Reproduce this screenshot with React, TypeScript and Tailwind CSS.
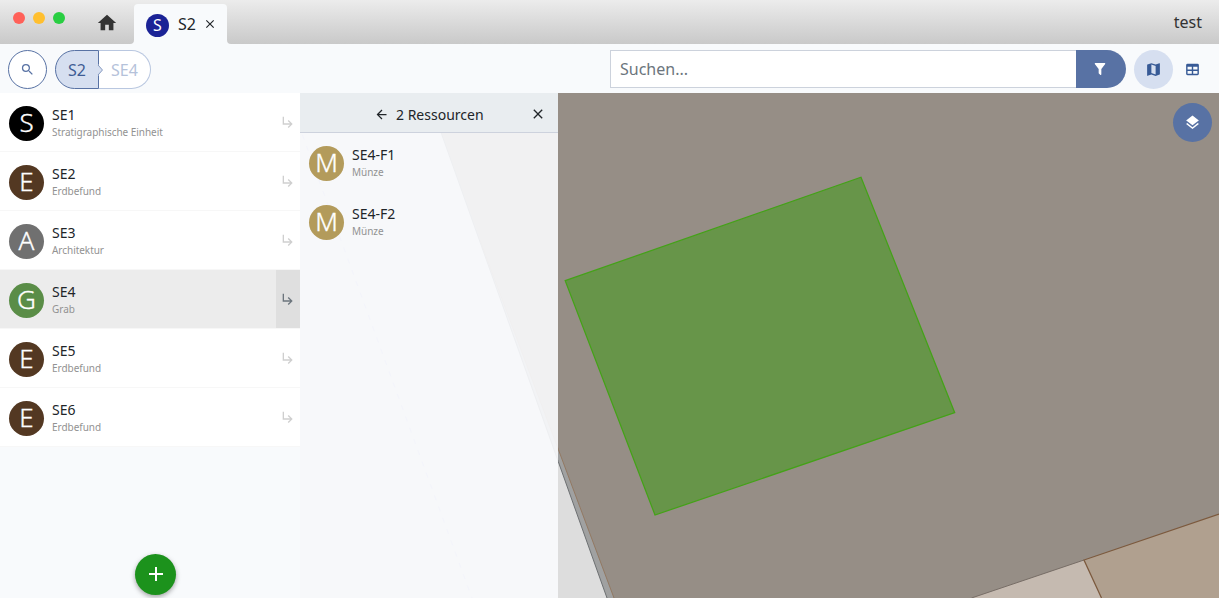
import React from "react";

const ICONS = {
  home: "M10,20V14H14V20H19V12H22L12,3L2,12H5V20H10Z",
  magnify:
    "M9.5,3A6.5,6.5 0 0,1 16,9.5C16,11.11 15.41,12.59 14.44,13.73L14.71,14H15.5L20.5,19L19,20.5L14,15.5V14.71L13.73,14.44C12.59,15.41 11.11,16 9.5,16A6.5,6.5 0 0,1 3,9.5A6.5,6.5 0 0,1 9.5,3M9.5,5C7,5 5,7 5,9.5C5,12 7,14 9.5,14C12,14 14,12 14,9.5C14,7 12,5 9.5,5Z",
  close:
    "M19,6.41L17.59,5L12,10.59L6.41,5L5,6.41L10.59,12L5,17.59L6.41,19L12,13.41L17.59,19L19,17.59L13.41,12L19,6.41Z",
  arrowLeft:
    "M20,11V13H8L13.5,18.5L12.08,19.92L4.16,12L12.08,4.08L13.5,5.5L8,11H20Z",
  sub: "M19,15L13,21L11.58,19.58L15.17,16H4V4H6V14H15.17L11.58,10.42L13,9L19,15Z",
  map: "M15,19L9,16.89V5L15,7.11M20.5,3C20.44,3 20.39,3 20.34,3L15,5.1L9,3L3.36,4.9C3.15,4.97 3,5.15 3,5.38V20.5A0.5,0.5 0 0,0 3.5,21C3.55,21 3.61,21 3.66,20.97L9,18.9L15,21L20.64,19.1C20.85,19 21,18.85 21,18.62V3.5A0.5,0.5 0 0,0 20.5,3Z",
  table:
    "M5,4H19A2,2 0 0,1 21,6V18A2,2 0 0,1 19,20H5A2,2 0 0,1 3,18V6A2,2 0 0,1 5,4M5,8V12H11V8H5M13,8V12H19V8H13M5,14V18H11V14H5M13,14V18H19V14H13Z",
  layers:
    "M12,16L19.36,10.27L21,9L12,2L3,9L4.63,10.27M12,18.54L4.62,12.81L3,14.07L12,21.07L21,14.07L19.37,12.8L12,18.54Z",
  filter:
    "M14,12V19.88C14.04,20.18 13.94,20.5 13.71,20.71C13.32,21.1 12.69,21.1 12.3,20.71L10.29,18.7C10.06,18.47 9.96,18.16 10,17.87V12H9.97L4.21,4.62C3.87,4.19 3.95,3.56 4.38,3.22C4.57,3.08 4.78,3 5,3H19C19.22,3 19.43,3.08 19.62,3.22C20.05,3.56 20.13,4.19 19.79,4.62L14.03,12H14Z",
  plus: "M19,13H13V19H11V13H5V11H11V5H13V11H19V13Z",
};

function Icon({ name, size, className = "" }: { name: keyof typeof ICONS; size: number; className?: string }) {
  return (
    <svg width={size} height={size} viewBox="0 0 24 24" fill="currentColor" className={`shrink-0 ${className}`}>
      <path d={ICONS[name]} />
    </svg>
  );
}

type Item = { id: string; category: string; letter: string; color: string; selected?: boolean };

const ITEMS: Item[] = [
  { id: "SE1", category: "Stratigraphische Einheit", letter: "S", color: "bg-black" },
  { id: "SE2", category: "Erdbefund", letter: "E", color: "bg-[#533822]" },
  { id: "SE3", category: "Architektur", letter: "A", color: "bg-[#707070]" },
  { id: "SE4", category: "Grab", letter: "G", color: "bg-[#5a8d47]", selected: true },
  { id: "SE5", category: "Erdbefund", letter: "E", color: "bg-[#533822]" },
  { id: "SE6", category: "Erdbefund", letter: "E", color: "bg-[#533822]" },
];

const FINDS: Item[] = [
  { id: "SE4-F1", category: "Münze", letter: "M", color: "bg-[#b39b5b]" },
  { id: "SE4-F2", category: "Münze", letter: "M", color: "bg-[#b39b5b]" },
];

function Entry({ item }: { item: Item }) {
  return (
    <>
      <div className={`ml-[9px] mt-0.5 flex size-[35px] shrink-0 items-center justify-center rounded-full pb-0.5 text-[26px] font-light leading-none text-white [-webkit-text-stroke:0.35px_white] ${item.color}`}>
        {item.letter}
      </div>
      <div className="ml-2 grow pt-px">
        <div className="text-[14px] leading-[18px] text-[#212529]">{item.id}</div>
        <div className="text-[10px] leading-4 tracking-[-0.04px] text-[#929292]">{item.category}</div>
      </div>
    </>
  );
}

function MapCanvas() {
  return (
    <svg className="absolute inset-0" width="919" height="505" viewBox="300 93 919 505">
      <rect x="300" y="93" width="919" height="505" fill="#dddddd" />
      <path d="M427 93L558.3 461.7L607 598H1219V93Z" fill="#a0a1a1" />
      <path d="M427 93L480 240L558.3 449.3L614 598H1219V93Z" fill="#968e86" />
      <path d="M427 93L558.3 461.7L607 598" fill="none" stroke="#6d7072" />
      <path d="M480 240L558.3 449.3L614 598" fill="none" stroke="#927963" />
      <path d="M290 101L472 598" fill="none" stroke="#b0b0ea" strokeDasharray="5 7" />
      <path d="M971.500 598L1084 560L1101.500 598Z" fill="#c5bab0" />
      <path d="M1084 560L1219 514V598H1101.500Z" fill="#b0a08f" />
      <path d="M971.500 598L1084 560" stroke="#776d66" />
      <path d="M1101.500 598L1084 560L1219 514" fill="none" stroke="#7c5a3e" strokeWidth="1.25" />
      <path d="M565.200 280.700L861 177.200L954.700 412.700L655 515Z" fill="#679549" stroke="#44a218" strokeWidth="1.250" />
    </svg>
  );
}

export default function App() {
  return (
    <div className="flex h-[598px] w-[1219px] flex-col overflow-hidden bg-[#f8fafc] font-['Noto_Sans','Open_Sans',sans-serif] text-[#212529]">
      <header className="flex h-11 shrink-0 bg-linear-to-b from-[#ececec] to-[#c9c9c9]">
        <div className="flex gap-2 pl-[13px] pt-3">
          <span className="size-3 rounded-full bg-[#ff6159]" />
          <span className="size-3 rounded-full bg-[#ffbf2f]" />
          <span className="size-3 rounded-full bg-[#29ce42]" />
        </div>
        <Icon name="home" size={22} className="ml-[31px] mt-3 text-[#333333]" />
        <div className="ml-3 flex items-end">
          <svg width="4" height="4" viewBox="0 0 4 4" fill="#f8fafc">
            <path d="M4 0V4H0A4 4 0 0 0 4 0Z" />
          </svg>
          <div className="flex h-10 w-[93px] items-center rounded-t bg-[#f8fafc]">
            <span className="ml-3 mt-[3px] flex size-[23px] items-center justify-center rounded-full bg-[#1b2396] pb-0.5 text-[16px] leading-none text-white">S</span>
            <span className="ml-[9px] text-[16px] leading-6">S2</span>
            <Icon name="close" size={14} className="ml-[7px]" />
          </div>
          <svg width="4" height="4" viewBox="0 0 4 4" fill="#f8fafc">
            <path d="M0 0V4H4A4 4 0 0 1 0 0Z" />
          </svg>
        </div>
        <div className="ml-auto mr-[17px] mt-[10px] text-[16px] leading-6 text-[#333333]">test</div>
      </header>

      <div className="flex h-[49px] shrink-0 items-start pt-1.5">
        <button className="ml-2 flex size-[39px] items-center justify-center rounded-full border border-[#5872a4] bg-white text-[#5872a4]">
          <Icon name="magnify" size={15} />
        </button>
        <div className="ml-2 flex h-[39px] text-[16px]">
          <div className="relative flex w-11 items-center justify-center rounded-l-full border border-[#5872a4] bg-[#d6dff0] text-[#3e5c94]">
            S2
            <svg className="absolute -right-[6px] top-[13px]" width="7" height="12" viewBox="0 0 7 12">
              <path d="M0 0L1 0L5.500 6L1 12H0Z" fill="#d6dff0" />
              <path d="M1 1L5.500 6L1 11" fill="none" stroke="#5872a4" strokeOpacity=".65" />
            </svg>
          </div>
          <div className="flex w-[52px] items-center justify-center rounded-r-full border border-l-0 border-[#b9c7e0] bg-white text-[#b5c2da]">
            SE4
          </div>
        </div>
        <div className="ml-auto flex h-[38px] w-[466px] items-center border border-r-0 border-[#ccd2dc] bg-white pl-[9px] text-[16px] text-[#6c757d]">
          Suchen...
        </div>
        <button className="flex h-[38px] w-[50px] items-center justify-center rounded-r-full bg-[#5872a4] pr-0.5 text-white">
          <Icon name="filter" size={16} />
        </button>
        <button className="ml-2 flex size-[39px] items-center justify-center rounded-full bg-[#d6dff0] text-[#375a96]">
          <Icon name="map" size={17} />
        </button>
        <button className="mr-[7px] flex size-[39px] items-center justify-center text-[#375a96]">
          <Icon name="table" size={17} />
        </button>
      </div>

      <div className="flex h-[505px]">
        <aside className="flex w-[300px] shrink-0 flex-col">
          {ITEMS.map((item) => (
            <div key={item.id} className={`flex h-[59px] items-center border-b border-[#f7f7f7] ${item.selected ? "bg-[#ececec]" : "bg-white"}`}>
              <Entry item={item} />
              <div className={`flex h-full w-6 items-center justify-center ${item.selected ? "bg-[#dfdfdf] text-[#6c757d]" : "text-[#cfcfcf]"}`}>
                <Icon name="sub" size={16} />
              </div>
            </div>
          ))}
          <button className="mb-[3px] ml-[135px] mt-auto flex size-[41px] items-center justify-center rounded-full bg-[#1c921c] pb-px text-white shadow-[0_2px_5px_rgba(0,0,0,0.35)]">
            <Icon name="plus" size={24} />
          </button>
        </aside>

        <main className="relative flex grow overflow-hidden">
          <MapCanvas />
          <section className="relative flex w-[258px] flex-col">
            <div className="flex h-10 items-center border-b border-[#cdd2dd] bg-[#e9edf0]">
              <Icon name="arrowLeft" size={15} className="ml-[74px] mt-[3px]" />
              <h2 className="ml-[7px] mt-[5px] text-[14px] leading-5">2 Ressourcen</h2>
              <Icon name="close" size={16} className="ml-auto mr-3 mt-[3px]" />
            </div>
            <div className="grow bg-[#f8fafc]/92">
              {FINDS.map((item) => (
                <div key={item.id} className="flex h-[59px] items-center pb-px">
                  <Entry item={item} />
                </div>
              ))}
            </div>
          </section>
          <button className="relative ml-auto mr-[7px] mt-[10px] flex size-[39px] items-center justify-center rounded-full bg-[#5872a4] text-white">
            <Icon name="layers" size={17} />
          </button>
        </main>
      </div>
    </div>
  );
}
